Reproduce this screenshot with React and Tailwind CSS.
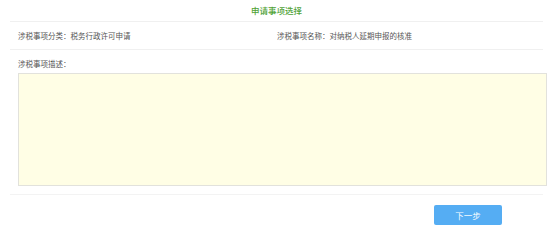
export default function App() {
  return (
    <div className="w-[554px] h-[236px] bg-white text-[#555] text-[7.5px]" style={{ fontFamily: '"Noto Sans CJK SC", "Noto Sans", sans-serif' }}>
      <div className="mx-[10px] w-[533px] h-[22px] border-b border-[#f0f0f0] flex items-center justify-center">
        <span className="text-[#4fa236] text-[8.5px] leading-none font-medium">申请事项选择</span>
      </div>
      <div className="mx-[10px] w-[533px] h-[28px] border-b border-[#f0f0f0] flex items-center">
        <div className="w-[267px] pl-[8px]">涉税事项分类：税务行政许可申请</div>
        <div>涉税事项名称：对纳税人延期申报的核准</div>
      </div>
      <div className="pl-[18px] h-[23px] flex items-center pt-[5px]">涉税事项描述：</div>
      <div className="ml-[18px] w-[529px] h-[113px] bg-[#fffee5] border border-[#e2e2dc]"></div>
      <div className="mx-[10px] w-[533px] h-[9px] border-b border-[#f3f3f3]"></div>
      <div className="flex pl-[434px] pt-[10px]">
        <div className="w-[68px] h-[20px] bg-[#55adf3] rounded-[2px] text-white text-[8.5px] flex items-center justify-center">下一步</div>
      </div>
    </div>
  );
}
